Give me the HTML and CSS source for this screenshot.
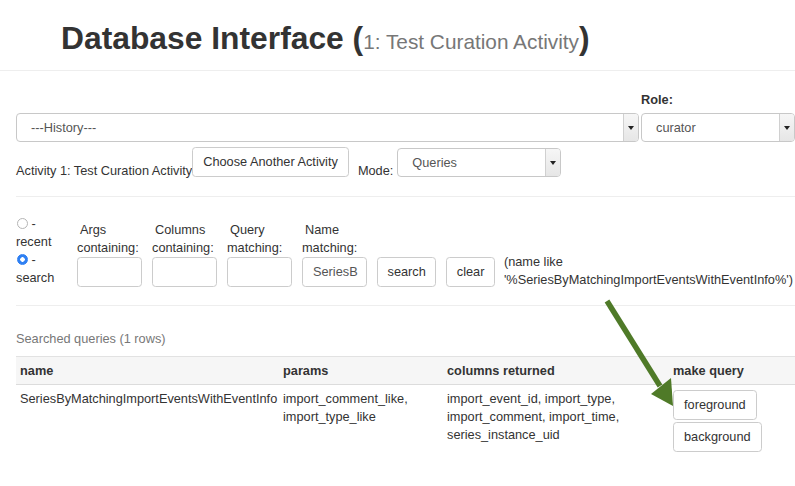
FILE: index.html
```html
<!DOCTYPE html>
<html>
<head>
<meta charset="utf-8">
<link rel="stylesheet" href="styles.css">
</head>
<body>
<header class="page-header">
  <h1 class="title">Database Interface (<span class="subtitle">1: Test Curation Activity</span>)</h1>
</header>
<main class="content">
  <div class="row-top">
    <div class="select select-history"><span class="sel-text">---History---</span><span class="sel-arrow"></span></div>
    <div class="role-box">
      <div class="role-label">Role:</div>
      <div class="select"><span class="sel-text">curator</span><span class="sel-arrow"></span></div>
    </div>
  </div>
  <div class="row-activity">
    <span class="inline-label">Activity 1: Test Curation Activity</span>
    <button class="btn">Choose Another Activity</button>
    <span class="inline-label mode-label">Mode:</span>
    <div class="select select-mode"><span class="sel-text">Queries</span><span class="sel-arrow"></span></div>
  </div>
  <hr class="divider divider-1">
  <div class="search-row">
    <div class="radios">
      <div><span class="radio"></span> -</div>
      <div>recent</div>
      <div><span class="radio radio-on"></span> -</div>
      <div>search</div>
    </div>
    <div class="field"><div class="field-label">Args containing:</div><div class="input"></div></div>
    <div class="field"><div class="field-label">Columns containing:</div><div class="input"></div></div>
    <div class="field"><div class="field-label">Query matching:</div><div class="input"></div></div>
    <div class="field"><div class="field-label">Name matching:</div><div class="input">SeriesB</div></div>
    <button class="btn btn-sm">search</button>
    <button class="btn btn-sm">clear</button>
    <div class="query-text">(name like '%SeriesByMatchingImportEventsWithEventInfo%')</div>
  </div>
  <hr class="divider divider-2">
  <div class="caption">Searched queries (1 rows)</div>
  <table class="results">
    <colgroup>
      <col class="c-name"><col class="c-params"><col class="c-cols"><col>
    </colgroup>
    <thead>
      <tr><th>name</th><th>params</th><th>columns returned</th><th>make query</th></tr>
    </thead>
    <tbody>
      <tr>
        <td>SeriesByMatchingImportEventsWithEventInfo</td>
        <td>import_comment_like, import_type_like</td>
        <td>import_event_id, import_type, import_comment, import_time, series_instance_uid</td>
        <td><button class="btn btn-block">foreground</button><button class="btn btn-block">background</button></td>
      </tr>
    </tbody>
  </table>
</main>
<svg class="arrow" width="795" height="486" viewBox="0 0 795 486">
  <line x1="607" y1="301" x2="660" y2="386" stroke="#4f7a28" stroke-width="5.5"/>
  <polygon points="673,406 651,394 671,378" fill="#4f7a28"/>
</svg>
</body>
</html>
```
FILE: styles.css
```css
html, body {
  margin: 0;
  padding: 0;
  background: #fff;
}
body {
  font-family: "Liberation Sans", Arial, Helvetica, sans-serif;
  font-size: 12.75px;
  line-height: 18px;
  color: #333;
  width: 795px;
  overflow: hidden;
}
.page-header {
  height: 71px;
  box-sizing: border-box;
  padding: 18px 0 0 61px;
  border-bottom: 1px solid #eee;
}
.title {
  margin: 0;
  font-size: 31.8px;
  line-height: 40px;
  font-weight: bold;
  color: #333;
  white-space: nowrap;
}
.subtitle {
  font-size: 20.8px;
  font-weight: normal;
  color: #777;
}
.content {
  padding: 20px 0 0 16px;
}
.row-top {
  display: flex;
  align-items: flex-end;
  gap: 2px;
}
.select-history {
  flex: 1;
}
.role-box {
  width: 154px;
}
.role-label {
  font-weight: bold;
  margin-bottom: 4px;
}
.select {
  display: flex;
  height: 29px;
  box-sizing: border-box;
  border: 1px solid #c8c8c8;
  border-radius: 4px;
  background: #fff;
  color: #555;
  overflow: hidden;
}
.sel-text {
  flex: 1;
  padding-left: 14px;
  line-height: 27px;
  white-space: nowrap;
}
.sel-arrow {
  width: 14px;
  border-left: 1px solid #d0d0d0;
  background: linear-gradient(#f6f6f6, #e6e6e6);
  position: relative;
}
.sel-arrow::after {
  content: "";
  position: absolute;
  left: 4px;
  top: 12px;
  border-left: 3px solid transparent;
  border-right: 3px solid transparent;
  border-top: 4px solid #222;
}
.row-activity {
  display: flex;
  align-items: flex-start;
  height: 30px;
  margin-top: 5px;
}
.inline-label {
  padding-top: 15px;
  white-space: nowrap;
}
.mode-label {
  margin-left: 9px;
  margin-right: 4px;
}
.select-mode {
  width: 164px;
  margin-top: 1px;
}
.btn {
  font-family: inherit;
  font-size: 12.75px;
  line-height: 18px;
  color: #333;
  background: #fff;
  border: 1px solid #ccc;
  border-radius: 3.6px;
  padding: 5px 10px;
  height: 30px;
  box-sizing: border-box;
  margin: 0;
  white-space: nowrap;
}
.btn-sm {
  padding: 5px 9.5px;
}
.divider {
  border: 0;
  border-top: 1px solid #eee;
  margin: 0;
}
.divider-1 {
  margin-top: 19px;
}
.search-row {
  display: flex;
  align-items: flex-end;
  gap: 10px;
  padding-top: 18px;
  margin-bottom: 18px;
}
.radios {
  width: 51px;
}
.radio {
  display: inline-block;
  width: 9px;
  height: 9px;
  border: 1px solid #b5b5b5;
  border-radius: 50%;
  margin-left: 1px;
  vertical-align: -1px;
  background: #fff;
}
.radio-on {
  border-color: #2d7ef2;
  background: radial-gradient(circle, #fff 0 2px, #2f80f3 2.5px);
}
.field {
  width: 65px;
}
.field-label {
  text-indent: 3px;
}
.input {
  height: 30px;
  box-sizing: border-box;
  border: 1px solid #ccc;
  border-radius: 3.6px;
  padding: 0 10px;
  line-height: 28px;
  color: #555;
  overflow: hidden;
  white-space: nowrap;
}
.query-text {
  flex: 1;
  min-width: 0;
  margin-bottom: -2px;
  margin-left: -1px;
}
.divider-2 {
  margin-bottom: 24px;
}
.caption {
  color: #777;
  margin-bottom: 8px;
}
.results {
  width: 779px;
  table-layout: fixed;
  border-collapse: collapse;
}
.c-name { width: 263px; }
.c-params { width: 164px; }
.c-cols { width: 226px; }
.results th {
  text-align: left;
  font-weight: bold;
  background: #f6f6f6;
  border-top: 1px solid #e2e2e2;
  border-bottom: 1px solid #dcdcdc;
  padding: 4.5px 4px;
}
.results td {
  vertical-align: top;
  padding: 4.5px 4px;
}
.btn-block {
  display: block;
  margin-bottom: 2px;
}
.arrow {
  position: absolute;
  left: 0;
  top: 0;
  pointer-events: none;
}
```
